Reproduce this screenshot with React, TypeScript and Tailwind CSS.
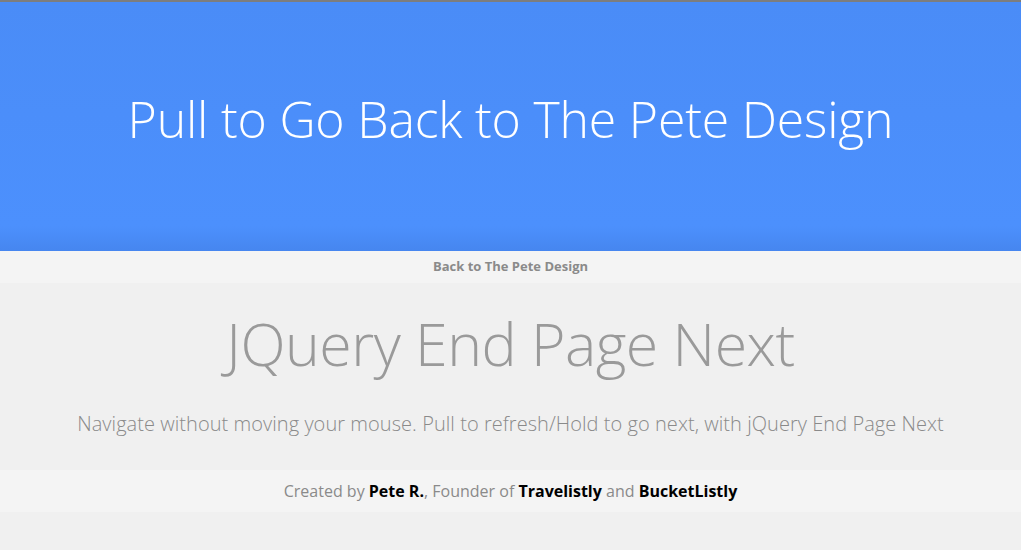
import React from "react";

const App: React.FC = () => {
  return (
    <div className="min-h-[550px] bg-[#f0f0f0] font-['Open_Sans',sans-serif]">
      <div className="h-[251px] border-t-2 border-[#7d7d7d] bg-gradient-to-b from-[#4a8cf7] via-[#4c90fd] via-90% to-[#4686ef] flex items-center justify-center">
        <h1 className="text-white text-[50px] font-light tracking-[-0.2px] pb-[14px]">Pull to Go Back to The Pete Design</h1>
      </div>
      <div className="h-[32px] bg-[#f4f4f4] flex items-center justify-center">
        <a className="text-[#8a8a8a] text-[13px] font-bold">Back to The Pete Design</a>
      </div>
      <div className="flex flex-col items-center pt-[31px] h-[187px]">
        <h2 className="text-[#9a9a9a] text-[59px] font-light leading-none tracking-[-0.5px]">JQuery End Page Next</h2>
        <p className="text-[#8a8a8a] text-[20px] font-light mt-[36px] tracking-[0.05px]">
          Navigate without moving your mouse. Pull to refresh/Hold to go next, with jQuery End Page Next
        </p>
      </div>
      <div className="h-[42px] bg-[#f4f4f4] flex items-center justify-center text-[16px] text-[#8a8a8a]">
        <span>
          Created by <b className="text-black font-bold">Pete R.</b>, Founder of{" "}
          <b className="text-black font-bold">Travelistly</b> and{" "}
          <b className="text-black font-bold">BucketListly</b>
        </span>
      </div>
    </div>
  );
};

export default App;
